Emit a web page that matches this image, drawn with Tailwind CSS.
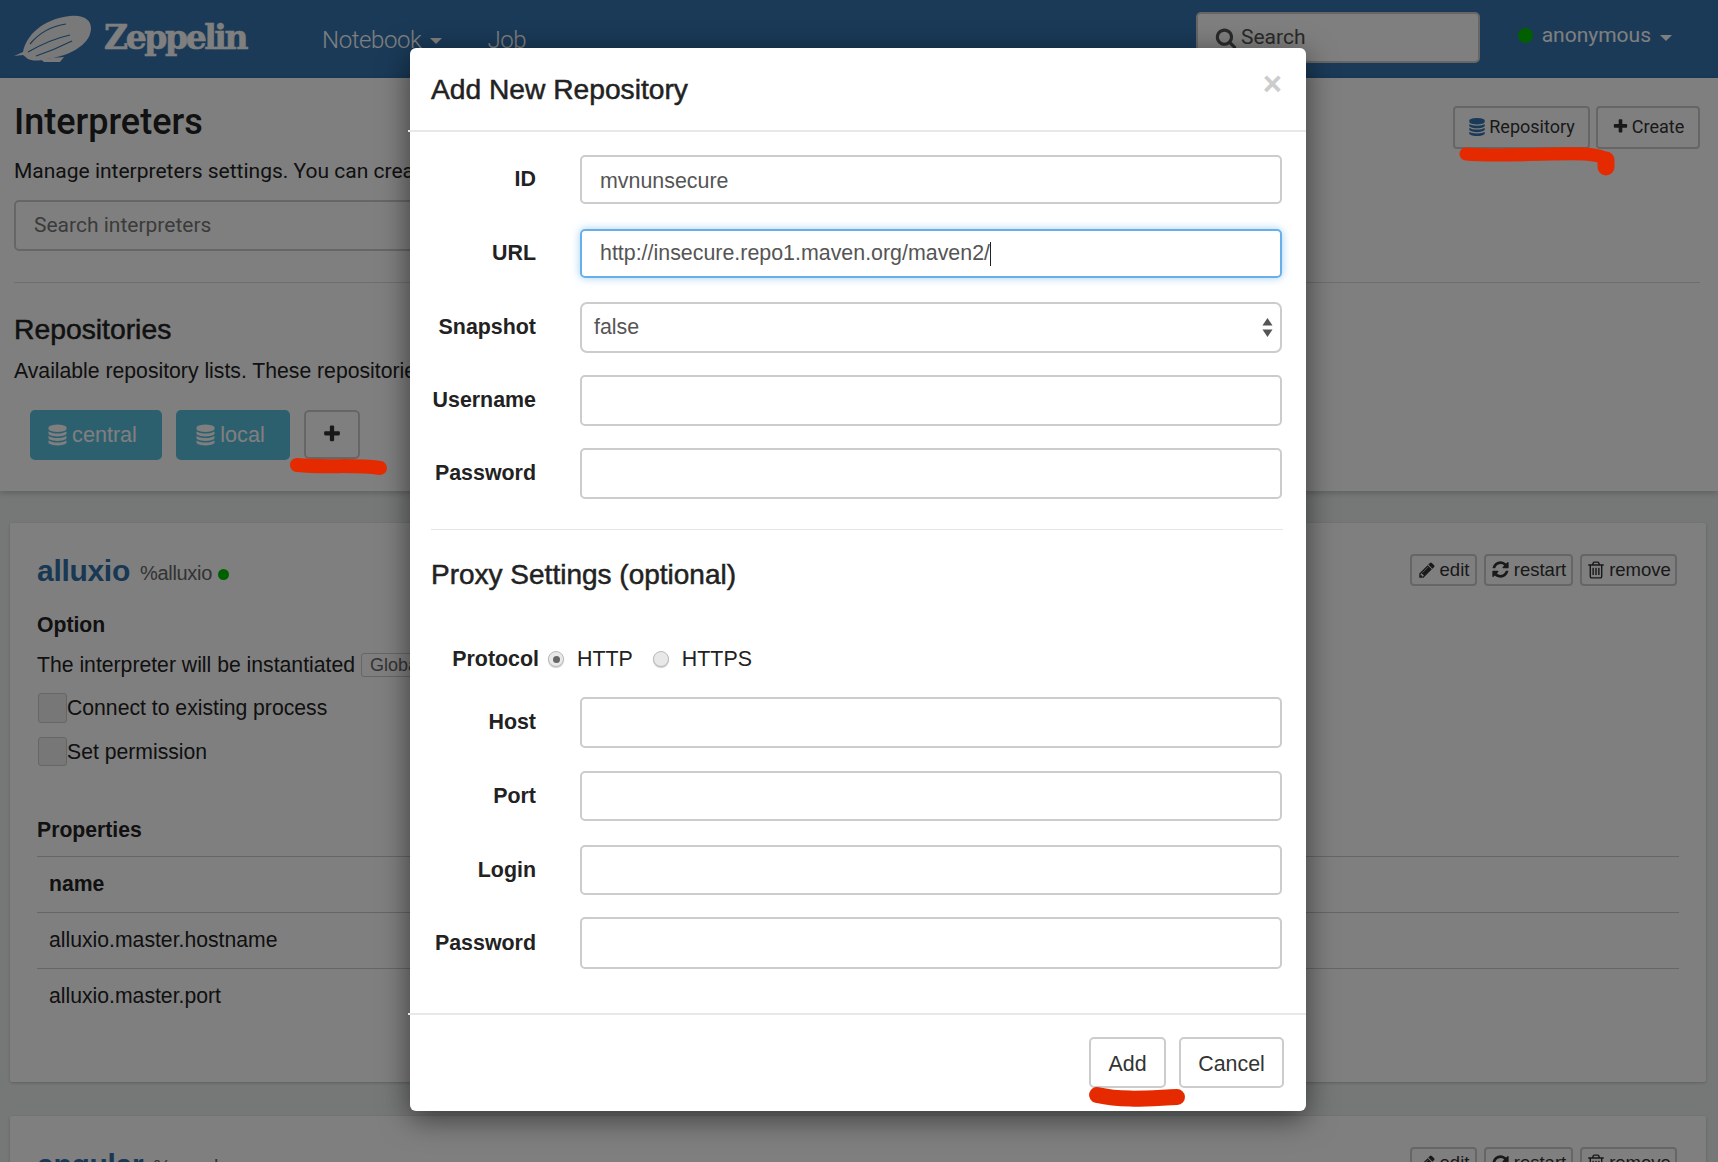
<!DOCTYPE html>
<html lang="en">
<head>
    <meta charset="UTF-8">
    <title>Zeppelin - Interpreters</title>
    <script src="https://cdn.jsdelivr.net/npm/@tailwindcss/browser@4"></script>
</head>
<body class="relative w-[1718px] h-[1162px] overflow-hidden bg-[#eaf0ee] text-[#222] text-[20px] font-['Liberation_Sans',Arial,sans-serif]">
    <!-- icon set -->
    <svg class="hidden">
        <symbol id="i-db" viewBox="0 0 1792 1792"><path fill="currentColor" d="M896 768q237 0 443-43t325-127v170q0 69-103 128t-280 93.5-385 34.5-385-34.5-280-93.5-103-128v-170q119 84 325 127t443 43zm0 768q237 0 443-43t325-127v170q0 69-103 128t-280 93.5-385 34.5-385-34.5-280-93.5-103-128v-170q119 84 325 127t443 43zm0-384q237 0 443-43t325-127v170q0 69-103 128t-280 93.5-385 34.5-385-34.5-280-93.5-103-128v-170q119 84 325 127t443 43zm0-1152q208 0 385 34.5t280 93.5 103 128v128q0 69-103 128t-280 93.5-385 34.5-385-34.5-280-93.5-103-128v-128q0-69 103-128t280-93.5 385-34.5z"/></symbol>
        <symbol id="i-plus" viewBox="0 0 1792 1792"><path fill="currentColor" d="M1600 736v192q0 40-28 68t-68 28h-416v416q0 40-28 68t-68 28h-192q-40 0-68-28t-28-68v-416h-416q-40 0-68-28t-28-68v-192q0-40 28-68t68-28h416v-416q0-40 28-68t68-28h192q40 0 68 28t28 68v416h416q40 0 68 28t28 68z"/></symbol>
        <symbol id="i-search" viewBox="0 0 1792 1792"><path fill="currentColor" d="M1216 832q0-185-131.5-316.5t-316.5-131.5-316.5 131.5-131.5 316.5 131.5 316.5 316.5 131.5 316.5-131.5 131.5-316.5zm512 832q0 52-38 90t-90 38q-54 0-90-38l-343-342q-179 124-399 124-143 0-273.5-55.5t-225-150-150-225-55.5-273.5 55.5-273.5 150-225 225-150 273.5-55.5 273.5 55.5 225 150 150 225 55.5 273.5q0 220-124 399l343 343q37 37 37 90z"/></symbol>
        <symbol id="i-edit" viewBox="0 0 1792 1792"><path fill="currentColor" d="M491 1536l91-91-235-235-91 91v107h128v128h107zm523-928q0-22-22-22-10 0-17 7l-542 542q-7 7-7 17 0 22 22 22 10 0 17-7l542-542q7-7 7-17zm-54-192l416 416-832 832h-416v-416zm683 96q0 53-37 90l-166 166-416-416 166-165q36-38 90-38 53 0 91 38l235 234q37 39 37 91z"/></symbol>
        <symbol id="i-restart" viewBox="0 0 1792 1792"><path fill="currentColor" d="M1639 1056q0 5-1 7-64 268-268 434.5t-478 166.5q-146 0-282.5-55t-243.5-157l-129 129q-19 19-45 19t-45-19-19-45v-448q0-26 19-45t45-19h448q26 0 45 19t19 45-19 45l-137 137q71 66 161 102t187 36q134 0 250-65t186-179q11-17 53-117 8-23 30-23h192q13 0 22.5 9.5t9.5 22.5zm25-800v448q0 26-19 45t-45 19h-448q-26 0-45-19t-19-45 19-45l138-138q-148-137-349-137-134 0-250 65t-186 179q-11 17-53 117-8 23-30 23h-199q-13 0-22.5-9.5t-9.5-22.5v-7q65-268 270-434.5t480-166.5q146 0 284 55.5t245 156.5l130-129q19-19 45-19t45 19 19 45z"/></symbol>
        <symbol id="i-trash" viewBox="0 0 1792 1792"><path fill="currentColor" d="M704 736v576q0 14-9 23t-23 9h-64q-14 0-23-9t-9-23v-576q0-14 9-23t23-9h64q14 0 23 9t9 23zm256 0v576q0 14-9 23t-23 9h-64q-14 0-23-9t-9-23v-576q0-14 9-23t23-9h64q14 0 23 9t9 23zm256 0v576q0 14-9 23t-23 9h-64q-14 0-23-9t-9-23v-576q0-14 9-23t23-9h64q14 0 23 9t9 23zm128 724v-948h-896v948q0 22 7 40.5t14.5 27 10.5 8.5h832q3 0 10.5-8.5t14.5-27 7-40.5zm-672-1076h448l-48-117q-7-9-17-11h-317q-10 2-17 11zm928 32v64q0 14-9 23t-23 9h-96v948q0 83-47 143.5t-113 60.5h-832q-66 0-113-58.5t-47-141.5v-952h-96q-14 0-23-9t-9-23v-64q0-14 9-23t23-9h309l70-167q15-37 54-63t79-26h320q40 0 79 26t54 63l70 167h309q14 0 23 9t9 23z"/></symbol>
    </svg>

    <!-- navbar -->
    <nav class="h-[78px] bg-[#3474b0] flex items-center text-white">
        <svg class="ml-[14px] w-[78px] h-[48px] mt-[-3px]" viewBox="0 0 78 48">
            <path fill="#f2f2f2" d="M0 42 L9 38 C12 22 28 5 56 2 C72 0 80 8 76 20 C72 33 52 43 32 45 C24 47 20 47 14 45 L9 41 Z"/>
            <path fill="none" stroke="#3474b0" stroke-width="1.2" d="M16 30 C26 18 38 12 52 10 M14 38 C28 30 42 24 56 21 M22 42 C34 38 46 33 58 27"/>
            <path fill="#f2f2f2" d="M26 45 L50 43 L46 48 L30 48 Z"/>
        </svg>
        <span class="ml-[12px] w-[143px] text-[33px] font-bold tracking-[-2.4px] font-['DejaVu_Serif',serif] leading-none mt-[-4px] [-webkit-text-stroke:0.6px_#fff]">Zeppelin</span>
        <div class="ml-[75px] flex items-center text-[24px] font-light font-['Roboto',sans-serif] tracking-[-0.4px] mt-[1px]">
            <span>Notebook</span>
            <span class="ml-[9px] mt-[3px] border-x-[6px] border-t-[6px] border-x-transparent border-t-white"></span>
            <span class="ml-[45px]">Job</span>
        </div>
        <div class="ml-auto flex items-center w-[284px] h-[51px] mt-[-3px] pl-[17px] bg-white border-2 border-[#ccc] rounded-[5px] text-[#555] text-[21px] gap-[4px] font-['Roboto',sans-serif]">
            <svg class="w-[22px] h-[22px]"><use href="#i-search"/></svg>
            <span>Search</span>
        </div>
        <div class="ml-[38px] mr-[46px] flex items-center mt-[-7px] text-[21px] font-['Roboto',sans-serif] w-[154px]">
            <span class="w-[15px] h-[15px] rounded-full bg-[#00c000]"></span>
            <span class="ml-[9px]">anonymous</span>
            <span class="ml-[9px] mt-[4px] border-x-[6px] border-t-[6px] border-x-transparent border-t-white"></span>
        </div>
    </nav>

    <!-- page header -->
    <section class="h-[413px] bg-white shadow-[0_2px_6px_rgba(0,0,0,0.2)] pl-[14px] pr-[18px] relative">
        <div class="flex items-start h-[205px] border-b border-[#ddd]">
            <div class="flex-1 whitespace-nowrap overflow-hidden font-['Roboto',sans-serif]">
                <h1 class="mt-[21px] text-[36px] font-medium leading-[46px]">Interpreters</h1>
                <p class="mt-[12px] text-[21px] leading-[28px]">Manage interpreters settings. You can create / edit / remove settings here.</p>
                <div class="mt-[15px] w-[600px] h-[51px] border-2 border-[#ccc] rounded-[5px] pl-[18px] flex items-center text-[#777] text-[21px]">Search interpreters</div>
            </div>
            <div class="flex gap-[6px] mt-[28px] text-[18px] font-['Roboto',sans-serif] text-[#333]">
                <div class="h-[43px] w-[137px] pb-[2px] border-2 border-[#ccc] rounded-[4px] flex items-center justify-center gap-[3px]">
                    <svg class="w-[18px] h-[22px] text-[#3474b0]" preserveAspectRatio="none"><use href="#i-db"/></svg>
                    <span>Repository</span>
                </div>
                <div class="h-[43px] w-[104px] pb-[2px] border-2 border-[#ccc] rounded-[4px] flex items-center justify-center gap-[3px]">
                    <svg class="w-[17px] h-[17px]"><use href="#i-plus"/></svg>
                    <span>Create</span>
                </div>
            </div>
        </div>
        <h2 class="mt-[28px] text-[28.3px] leading-[36px] [-webkit-text-stroke:0.5px_#222]">Repositories</h2>
        <p class="mt-[10px] text-[21.2px] leading-[28px] whitespace-nowrap">Available repository lists. These repositories are used to resolve external dependencies of interpreter.</p>
        <div class="mt-[25px] ml-[16px] flex items-start">
            <div class="w-[132px] h-[50px] pr-[8px] rounded-[5px] bg-[#5bc0de] text-white flex items-center justify-center gap-[4px] text-[21.6px]">
                <svg class="w-[21px] h-[24px]"><use href="#i-db"/></svg><span>central</span>
            </div>
            <div class="ml-[14px] w-[114px] h-[50px] pr-[6px] rounded-[5px] bg-[#5bc0de] text-white flex items-center justify-center gap-[4px] text-[21.6px]">
                <svg class="w-[21px] h-[24px]"><use href="#i-db"/></svg><span>local</span>
            </div>
            <div class="ml-[14px] w-[56px] h-[49px] rounded-[5px] bg-white border-2 border-[#ccc] flex items-center justify-center pb-[2px]">
                <svg class="w-[20px] h-[20px] text-[#333]"><use href="#i-plus"/></svg>
            </div>
        </div>
    </section>

    <!-- interpreter cards -->
    <main class="px-[10px] pr-[12px] pt-[32px]">
        <article class="relative h-[559px] bg-white shadow-[0_1px_3px_rgba(0,0,0,0.2)] rounded-[2px] px-[27px] text-[21.2px]">
            <div class="flex items-center pt-[26px] h-[68px]">
                <span class="text-[30px] font-bold text-[#3071a9] tracking-[-0.3px]">alluxio</span>
                <span class="ml-[10px] mt-[6px] text-[#666] text-[20px] tracking-[-0.3px]">%alluxio</span>
                <span class="ml-[6px] mt-[8px] w-[11px] h-[11px] rounded-full bg-[#00c000]"></span>
                <div class="ml-auto mr-[2px] flex gap-[7px] -mt-[1px] text-[18.5px] text-[#333]">
                    <div class="h-[32px] w-[67px] border-2 border-[#ccc] rounded-[4px] flex items-center justify-center gap-[4px]"><svg class="w-[18px] h-[18px]"><use href="#i-edit"/></svg>edit</div>
                    <div class="h-[32px] w-[89px] border-2 border-[#ccc] rounded-[4px] flex items-center justify-center gap-[4px]"><svg class="w-[19px] h-[19px]"><use href="#i-restart"/></svg>restart</div>
                    <div class="h-[32px] w-[97px] border-2 border-[#ccc] rounded-[4px] flex items-center justify-center gap-[3px]"><svg class="w-[20px] h-[20px]"><use href="#i-trash"/></svg>remove</div>
                </div>
            </div>
            <h3 class="mt-[20px] font-bold leading-[28px]">Option</h3>
            <div class="mt-[12px] flex items-center leading-[28px] whitespace-nowrap">The interpreter will be instantiated
                <span class="ml-[6px] px-[8px] h-[24px] border border-[#ccc] rounded-[3px] text-[#666] text-[18px] leading-[22px]">Globally</span>
            </div>
            <div class="mt-[14px] flex items-center leading-[28px]"><span class="w-[29px] h-[30px] border border-[#ccc] bg-[#eee] rounded-[3px] ml-[1px]"></span>Connect to existing process</div>
            <div class="mt-[14px] flex items-center leading-[28px]"><span class="w-[29px] h-[29px] border border-[#ccc] bg-[#eee] rounded-[3px] ml-[1px]"></span>Set permission</div>
            <h3 class="mt-[50px] font-bold leading-[28px]">Properties</h3>
            <table class="mt-[12px] w-full">
                <thead><tr class="border-y border-[#ccc] h-[56px]"><th class="text-left pl-[12px] pb-[2px] font-bold w-[700px]">name</th><th class="text-left font-bold">value</th></tr></thead>
                <tbody>
                    <tr class="border-b border-[#ccc] h-[56px]"><td class="pl-[12px] pb-[2px]">alluxio.master.hostname</td><td>localhost</td></tr>
                    <tr class="h-[56px]"><td class="pl-[12px] pb-[2px]">alluxio.master.port</td><td>19998</td></tr>
                </tbody>
            </table>
        </article>
        <article class="mt-[34px] h-[200px] bg-white shadow-[0_1px_3px_rgba(0,0,0,0.2)] rounded-[2px] px-[27px]">
            <div class="flex items-center pt-[27px] h-[69px]">
                <span class="text-[30px] font-bold text-[#3071a9] tracking-[-0.3px]">angular</span>
                <span class="ml-[10px] mt-[6px] text-[#666] text-[20px] tracking-[-0.3px]">%angular</span>
                <div class="ml-auto mr-[2px] flex gap-[7px] -mt-[2px] text-[18.5px] text-[#333]">
                    <div class="h-[32px] w-[67px] border-2 border-[#ccc] rounded-[4px] flex items-center justify-center gap-[4px]"><svg class="w-[18px] h-[18px]"><use href="#i-edit"/></svg>edit</div>
                    <div class="h-[32px] w-[89px] border-2 border-[#ccc] rounded-[4px] flex items-center justify-center gap-[4px]"><svg class="w-[19px] h-[19px]"><use href="#i-restart"/></svg>restart</div>
                    <div class="h-[32px] w-[97px] border-2 border-[#ccc] rounded-[4px] flex items-center justify-center gap-[3px]"><svg class="w-[20px] h-[20px]"><use href="#i-trash"/></svg>remove</div>
                </div>
            </div>
        </article>
    </main>

    <!-- backdrop -->
    <div class="absolute inset-0 bg-black/50"></div>

    <!-- modal -->
    <div class="absolute left-[410px] top-[48px] w-[896px] h-[1063px] bg-white rounded-[6px] shadow-[0_7px_30px_rgba(0,0,0,0.55)] flex flex-col">
        <div class="h-[82px] shrink-0 flex items-start justify-between pl-[21px] pr-[24px]">
            <h4 class="mt-[23px] text-[28.2px] leading-[36px] text-[#222] [-webkit-text-stroke:0.5px_#222]">Add New Repository</h4>
            <span class="mt-[21px] text-[33px] leading-[30px] font-bold text-[#ccc]">×</span>
        </div>
        <div class="h-[2px] -ml-[2px] shrink-0 bg-[#e8e8e8]"></div>

        <form class="flex-1 pr-[24px] pt-[23px] text-[21.4px] text-[#555]">
            <div class="flex items-center h-[49px]">
                <label class="w-[126px] text-right font-bold text-[#222]">ID</label>
                <div class="ml-[44px] flex-1 h-full border-2 border-[#ccc] rounded-[5px] flex items-center pl-[18px] pt-[3px]">mvnunsecure</div>
            </div>
            <div class="flex items-center h-[49px] mt-[25px]">
                <label class="w-[126px] text-right font-bold text-[#222]">URL</label>
                <div class="ml-[44px] flex-1 h-full border-2 border-[#66afe9] rounded-[5px] flex items-center pl-[18px] shadow-[0_0_8px_rgba(102,175,233,0.6)]">http://insecure.repo1.maven.org/maven2/<span class="w-px h-[24px] bg-[#222]"></span></div>
            </div>
            <div class="flex items-center h-[51px] mt-[24px]">
                <label class="w-[126px] text-right font-bold text-[#222]">Snapshot</label>
                <div class="ml-[44px] flex-1 h-full border-2 border-[#ccc] rounded-[7px] flex items-center justify-between pl-[12px] pr-[7px]">false
                    <svg class="w-[11px] h-[19px] text-[#555]" viewBox="0 0 12 20" preserveAspectRatio="none"><path fill="currentColor" d="M6 0 L11.5 8 H.5 Z M.5 12 H11.5 L6 20 Z"/></svg>
                </div>
            </div>
            <div class="flex items-center h-[51px] mt-[22px]">
                <label class="w-[126px] text-right font-bold text-[#222]">Username</label>
                <div class="ml-[44px] flex-1 h-full border-2 border-[#ccc] rounded-[5px]"></div>
            </div>
            <div class="flex items-center h-[51px] mt-[22px]">
                <label class="w-[126px] text-right font-bold text-[#222]">Password</label>
                <div class="ml-[44px] flex-1 h-full border-2 border-[#ccc] rounded-[5px]"></div>
            </div>
            <div class="h-[1px] mt-[30px] ml-[21px] -mr-[1px] bg-[#e5e5e5]"></div>
            <h4 class="mt-[27px] ml-[21px] text-[28px] leading-[36px] text-[#222] [-webkit-text-stroke:0.5px_#222]">Proxy Settings (optional)</h4>
            <div class="flex items-center h-[28px] mt-[52px] text-[#222]">
                <label class="w-[129px] text-right font-bold">Protocol</label>
                <span class="ml-[9px] w-[16px] h-[16px] rounded-full border border-[#bbb] bg-[#e8e8e8] flex items-center justify-center shadow-[0_1px_1px_rgba(0,0,0,0.2)]"><span class="w-[7px] h-[7px] rounded-full bg-[#666]"></span></span>
                <span class="ml-[13px]">HTTP</span>
                <span class="ml-[20px] w-[16px] h-[16px] rounded-full border border-[#bbb] bg-[#e8e8e8] shadow-[0_1px_1px_rgba(0,0,0,0.2)]"></span>
                <span class="ml-[13px]">HTTPS</span>
            </div>
            <div class="flex items-center h-[51px] mt-[24px]">
                <label class="w-[126px] text-right font-bold text-[#222]">Host</label>
                <div class="ml-[44px] flex-1 h-full border-2 border-[#ccc] rounded-[5px]"></div>
            </div>
            <div class="flex items-center h-[50px] mt-[23px]">
                <label class="w-[126px] text-right font-bold text-[#222]">Port</label>
                <div class="ml-[44px] flex-1 h-full border-2 border-[#ccc] rounded-[5px]"></div>
            </div>
            <div class="flex items-center h-[50px] mt-[24px]">
                <label class="w-[126px] text-right font-bold text-[#222]">Login</label>
                <div class="ml-[44px] flex-1 h-full border-2 border-[#ccc] rounded-[5px]"></div>
            </div>
            <div class="flex items-center h-[52px] mt-[22px]">
                <label class="w-[126px] text-right font-bold text-[#222]">Password</label>
                <div class="ml-[44px] flex-1 h-full border-2 border-[#ccc] rounded-[5px]"></div>
            </div>
        </form>

        <div class="h-[2px] -ml-[2px] shrink-0 bg-[#e8e8e8]"></div>
        <div class="h-[96px] shrink-0 flex justify-end gap-[13px] pt-[22px] pr-[22px] text-[21.4px] text-[#333]">
            <div class="w-[77px] h-[51px] pt-[3px] border-2 border-[#ccc] rounded-[5px] flex items-center justify-center">Add</div>
            <div class="w-[105px] h-[51px] pt-[3px] border-2 border-[#ccc] rounded-[5px] flex items-center justify-center">Cancel</div>
        </div>
    </div>

    <!-- red marker annotations drawn on the screenshot -->
    <svg class="absolute left-0 top-0 w-[1718px] h-[1162px] pointer-events-none" viewBox="0 0 1718 1162" fill="none" stroke="#e52a00" stroke-linecap="round">
        <path stroke-width="13" d="M1466 154 C1500 157 1540 153 1585 154 C1598 155 1606 157 1607 162"/>
        <path stroke-width="17" d="M1606 160 L1606 167"/>
        <path stroke-width="14" d="M297 465 C330 468 350 464 380 468"/>
        <path stroke-width="16" d="M1097 1095 C1125 1101 1150 1098 1177 1097"/>
    </svg>
</body>
</html>
